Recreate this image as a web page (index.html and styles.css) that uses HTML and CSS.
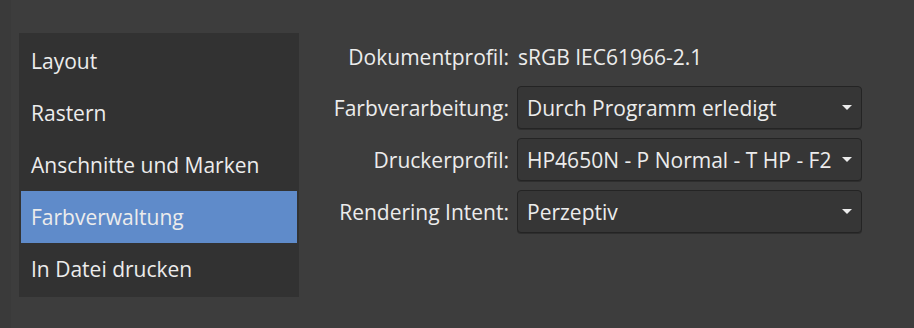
FILE: index.html
```html
<!DOCTYPE html>
<html>
<head>
    <title>Drucken</title>
    <link rel="stylesheet" href="styles.css">
</head>
<body>
    <div class="dialog">
        <div class="strip"></div>

        <ul class="sidebar">
            <li>Layout</li>
            <li>Rastern</li>
            <li>Anschnitte und Marken</li>
            <li class="active">Farbverwaltung</li>
            <li>In Datei drucken</li>
        </ul>

        <div class="form">
            <span class="label first">Dokumentprofil:</span>
            <span class="value first">sRGB IEC61966-2.1</span>

            <span class="label">Farbverarbeitung:</span>
            <div class="select">
                <span class="text">Durch Programm erledigt</span>
                <span class="arrow"></span>
            </div>

            <span class="label">Druckerprofil:</span>
            <div class="select">
                <span class="text">HP4650N - P Normal - T HP - F2</span>
                <span class="arrow"></span>
            </div>

            <span class="label">Rendering Intent:</span>
            <div class="select">
                <span class="text">Perzeptiv</span>
                <span class="arrow"></span>
            </div>
        </div>
    </div>
</body>
</html>
```
FILE: styles.css
```css
body {
    margin: 0;
    background-color: #3d3d3d;
    font-family: "Open Sans", "Noto Sans", sans-serif;
    font-size: 21px;
    color: #ececec;
}

.dialog {
    display: flex;
    align-items: flex-start;
    height: 328px;
}

.strip {
    width: 11px;
    height: 100%;
    background-color: #3a3a3a;
}

.sidebar {
    list-style: none;
    margin: 33px 0 0 8px;
    padding: 2px;
    width: 276px;
    background-color: #323232;
}

.sidebar li {
    height: 52px;
    line-height: 52px;
    padding-left: 10px;
    white-space: nowrap;
}

.sidebar li.active {
    background-color: #5f8bca;
}

.form {
    display: grid;
    grid-template-columns: 210px 345px;
    grid-auto-rows: 43px;
    column-gap: 8px;
    row-gap: 9px;
    margin-top: 34px;
    align-items: center;
}

.label {
    justify-self: end;
    white-space: nowrap;
}

.first {
    padding-top: 2px;
}

.value {
    padding-left: 1px;
}

.select {
    display: flex;
    align-items: center;
    box-sizing: border-box;
    height: 43px;
    padding: 0 9px 0 9px;
    background-color: #363636;
    border: 1px solid #242424;
    border-radius: 4px;
    box-shadow: 0 1px 0 #2e2e2e;
}

.select .text {
    flex: 1;
    overflow: hidden;
    white-space: nowrap;
}

.select .arrow {
    width: 0;
    height: 0;
    margin-left: 4px;
    border-left: 5px solid transparent;
    border-right: 5px solid transparent;
    border-top: 5px solid #ececec;
}
```
